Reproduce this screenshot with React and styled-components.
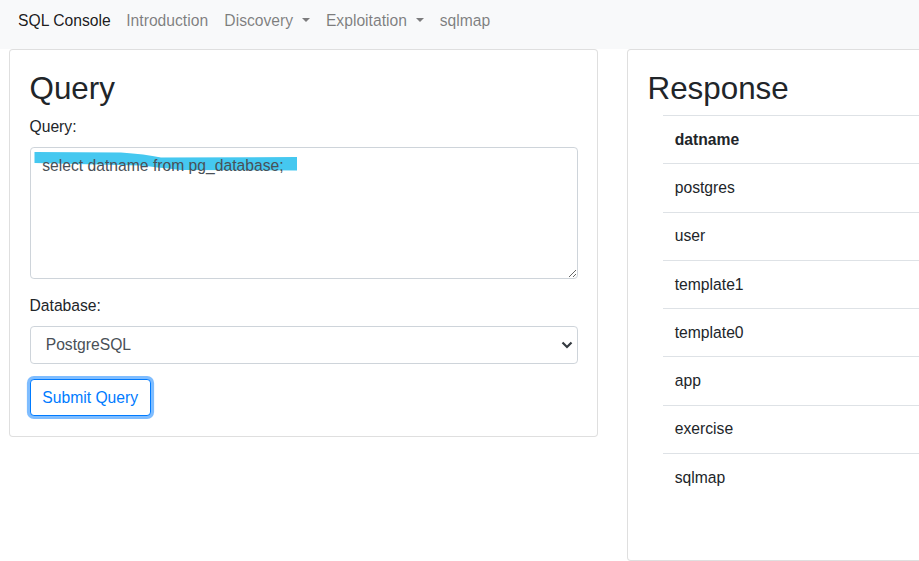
import React from 'react'
import styled, { createGlobalStyle } from 'styled-components'

const GlobalStyle = createGlobalStyle`
    html, body {
        margin: 0;
        padding: 0;
        overflow: hidden;
        background: #fff;
    }
    body {
        font-family: "Liberation Sans", Arial, sans-serif;
        font-size: 15.68px;
        line-height: 1.5;
        color: #212529;
    }
    * {
        box-sizing: border-box;
    }
`

const Navbar = styled.nav`
    display: flex;
    align-items: center;
    height: 49px;
    padding: 0 0 8px 18px;
    background-color: #f8f9fa;
`

const Brand = styled.a`
    color: rgba(0, 0, 0, 0.9);
    margin-right: 7.5px;
    white-space: nowrap;
`

const NavLink = styled.a`
    color: rgba(0, 0, 0, 0.5);
    padding: 0 8.1px;
    white-space: nowrap;

    ${(p) => p.$dropdown && `
        &::after {
            content: "";
            display: inline-block;
            margin-left: 0.55em;
            vertical-align: 0.255em;
            border-top: 0.3em solid;
            border-right: 0.3em solid transparent;
            border-left: 0.3em solid transparent;
        }
    `}
`

const Row = styled.main`
    display: flex;
    align-items: flex-start;
    gap: 29px;
    padding-left: 9px;
    width: 1300px;
`

const Card = styled.section`
    flex-shrink: 0;
    width: 589px;
    height: ${(p) => p.$height || 'auto'};
    padding: 19.5px;
    border: 1px solid rgba(0, 0, 0, 0.125);
    border-radius: 3.9px;
    background: #fff;
`

const Heading = styled.h2`
    margin: 0 0 7.84px;
    font-size: 31.36px;
    font-weight: 500;
    line-height: 1.2;
`

const FormGroup = styled.div`
    margin-bottom: 14.68px;
`

const Label = styled.label`
    display: block;
    margin-bottom: 8.84px;
`

const TextareaWrap = styled.div`
    position: relative;
    background: #fff;
    border-radius: 3.9px;
`

const Marker = styled.svg`
    position: absolute;
    left: 0;
    top: 0;
    pointer-events: none;
`

const Textarea = styled.textarea`
    position: relative;
    display: block;
    width: 100%;
    height: 132px;
    padding: 5.88px 11.76px;
    font: inherit;
    color: #495057;
    background: transparent;
    border: 1px solid #ced4da;
    border-radius: 3.9px;
    outline: none;
`

const SelectWrap = styled.div`
    position: relative;
`

const Select = styled.select`
    display: block;
    width: 100%;
    height: 37.5px;
    padding: 5.88px 11.76px 5.88px 15.2px;
    font: inherit;
    color: #495057;
    background: #fff;
    border: 1px solid #ced4da;
    border-radius: 3.9px;
    appearance: none;
    outline: none;
`

const Chevron = styled.svg`
    position: absolute;
    right: 5px;
    top: 15px;
    pointer-events: none;
`

const Button = styled.button`
    display: inline-block;
    height: 37.5px;
    padding: 5.88px 11.76px;
    font: inherit;
    color: #007bff;
    background: #fff;
    border: 1px solid #007bff;
    border-radius: 3.9px;
    box-shadow: 0 0 0 3.1px rgba(0, 123, 255, 0.5);
    cursor: pointer;
`

const TableWrap = styled.div`
    padding: 0 15.5px;
`

const Table = styled.table`
    width: 100%;
    border-collapse: collapse;
`

const Cell = styled.td`
    padding: 11.76px;
    line-height: 23.8px;
    border-top: 1px solid #dee2e6;
    text-align: left;
    font-weight: ${(p) => (p.$head ? 'bold' : 'normal')};
`

const databases = ['postgres', 'user', 'template1', 'template0', 'app', 'exercise', 'sqlmap']

function App() {
    return (
        <>
            <GlobalStyle />
            <Navbar>
                <Brand>SQL Console</Brand>
                <NavLink>Introduction</NavLink>
                <NavLink $dropdown>Discovery</NavLink>
                <NavLink $dropdown>Exploitation</NavLink>
                <NavLink>sqlmap</NavLink>
            </Navbar>
            <Row>
                <Card>
                    <Heading>Query</Heading>
                    <FormGroup>
                        <Label>Query:</Label>
                        <TextareaWrap>
                            <Marker width="300" height="40">
                                <path
                                    d="M4.5 5 L91 5.5 Q115 7 131 10.5 L267 10 L267 23.5 L150 23 Q125 20 110 18.5 L4.5 16 Z"
                                    fill="#45c8f0"
                                />
                            </Marker>
                            <Textarea defaultValue="select datname from pg_database;" spellCheck={false} />
                        </TextareaWrap>
                    </FormGroup>
                    <FormGroup>
                        <Label>Database:</Label>
                        <SelectWrap>
                            <Select defaultValue="postgres">
                                <option value="postgres">PostgreSQL</option>
                                <option value="mysql">MySQL</option>
                            </Select>
                            <Chevron width="12" height="8" viewBox="0 0 12 8">
                                <path d="M1.5 1.5 L6 6 L10.5 1.5" fill="none" stroke="#343a40" strokeWidth="2.2" />
                            </Chevron>
                        </SelectWrap>
                    </FormGroup>
                    <Button>Submit Query</Button>
                </Card>
                <Card $height="512px">
                    <Heading>Response</Heading>
                    <TableWrap>
                        <Table>
                            <thead>
                                <tr>
                                    <Cell as="th" $head>datname</Cell>
                                </tr>
                            </thead>
                            <tbody>
                                {databases.map((name) => (
                                    <tr key={name}>
                                        <Cell>{name}</Cell>
                                    </tr>
                                ))}
                            </tbody>
                        </Table>
                    </TableWrap>
                </Card>
            </Row>
        </>
    )
}

export default App
